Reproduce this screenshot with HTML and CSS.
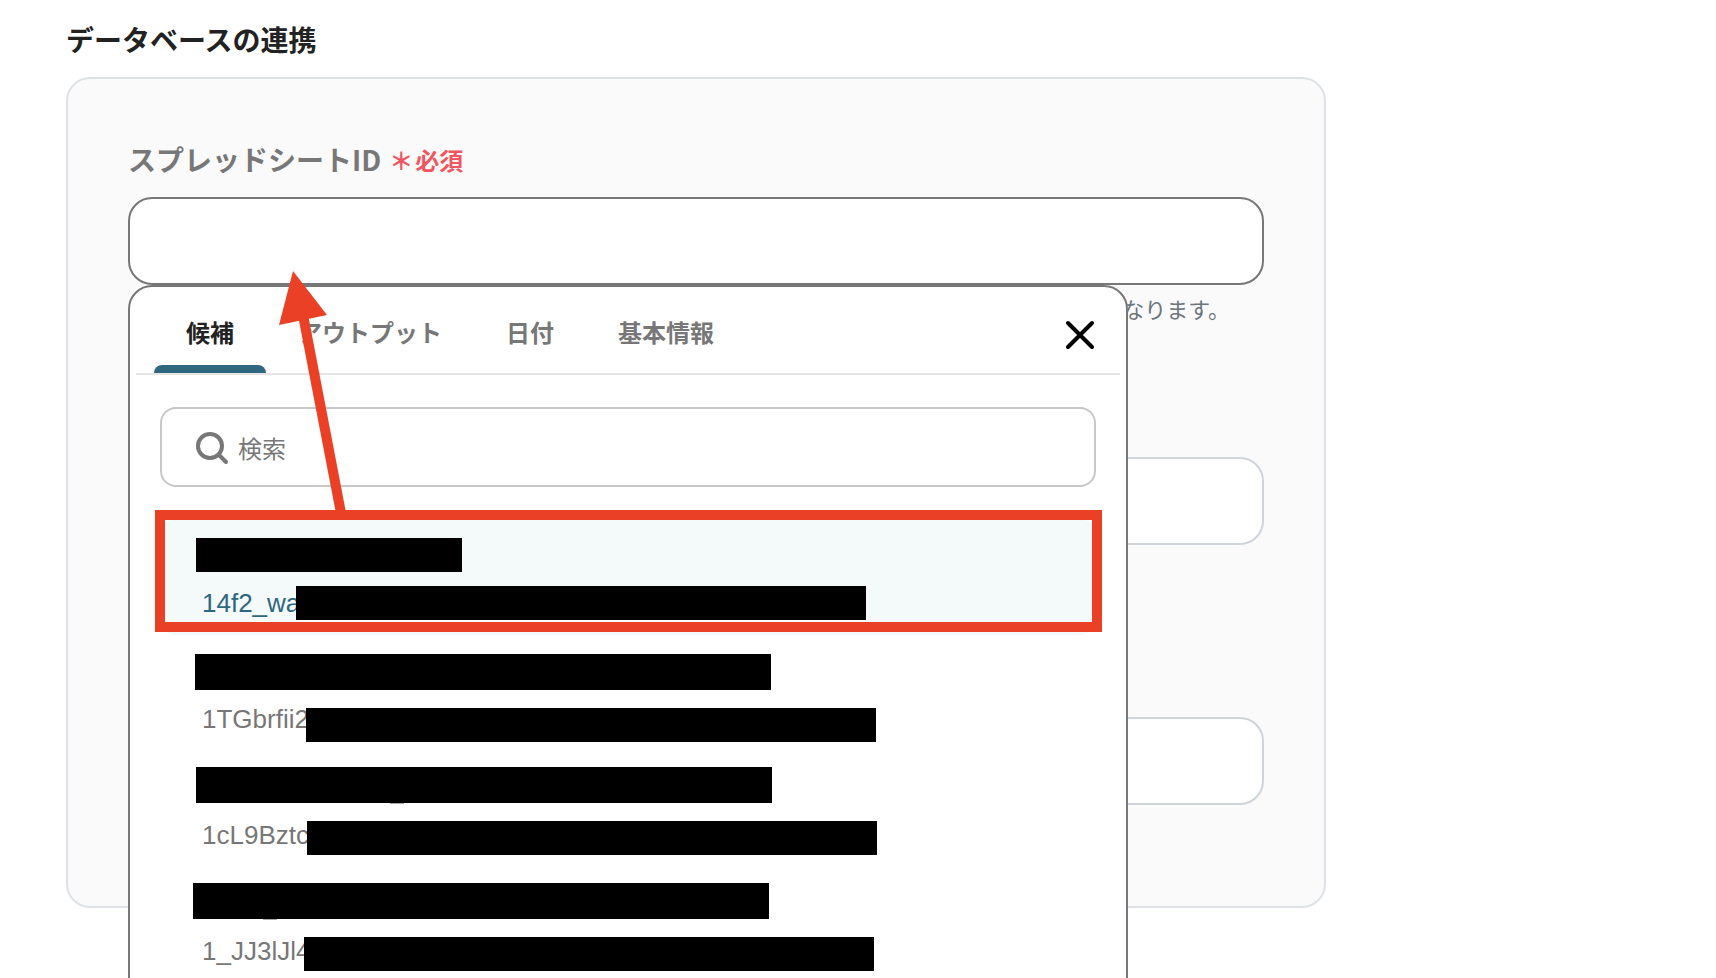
FILE: index.html
```html
<!DOCTYPE html>
<html lang="ja">
<head>
<meta charset="UTF-8">
<meta name="viewport" content="width=device-width,initial-scale=1">
<title>データベースの連携</title>
<link rel="stylesheet" href="styles.css">
</head>
<body>

<main class="page">
  <h1>データベースの連携</h1>

  <form class="card">
    <div class="field">
      <label for="spreadsheetId">スプレッドシートID <span class="required"><span>＊</span><span>必須</span></span></label>
      <div class="combo">
        <input id="spreadsheetId" class="text-input active" type="text">

        <!-- panel de candidatos -->
        <div class="dropdown">
          <div class="tabs">
            <button type="button" class="tab selected">候補</button>
            <button type="button" class="tab">アウトプット</button>
            <button type="button" class="tab">日付</button>
            <button type="button" class="tab">基本情報</button>
            <button type="button" class="close" aria-label="閉じる">
              <svg width="32" height="32" viewBox="0 0 32 32"><path d="M4 4L28 28M28 4L4 28"/></svg>
            </button>
          </div>

          <div class="search">
            <svg width="32" height="32" viewBox="0 0 32 32"><circle cx="14" cy="15" r="12"/><path d="M23 24L30 31"/></svg>
            <input type="search" placeholder="検索" aria-label="検索">
          </div>

          <ul class="options">
            <li><button type="button" class="option selected"><span class="name"></span><span class="id">14f2_wa</span></button></li>
            <li><button type="button" class="option"><span class="name"></span><span class="id">1TGbrfii2</span></button></li>
            <li><button type="button" class="option"><span class="name"></span><span class="id">1cL9Bztc</span></button></li>
            <li><button type="button" class="option"><span class="name"></span><span class="id">1_JJ3lJl4</span></button></li>
          </ul>

          <svg class="marks" aria-hidden="true">
            <g class="redacted">
              <rect x="66" y="251" width="266" height="34"/>
              <rect x="166" y="299" width="570" height="34"/>
              <rect x="65" y="367" width="576" height="36"/>
              <rect x="176" y="421" width="570" height="34"/>
              <rect x="66" y="480" width="576" height="36"/>
              <rect x="177" y="534" width="570" height="34"/>
              <rect x="63" y="596" width="576" height="36"/>
              <rect x="174" y="650" width="570" height="34"/>
            </g>
            <path class="under" d="M260 516h14v1h-14zM133 632h14v1h-14z"/>
            <rect class="frame" x="30" y="228" width="937" height="112"/>
            <path class="shaft" d="M173 28L211 226"/>
            <path class="head" d="M163 -16L149 38L197 28Z"/>
          </svg>
        </div>
      </div>
      <p class="help">なります。</p>
    </div>

    <div class="field">
      <label for="sheetName">シート名</label>
      <input id="sheetName" class="text-input" type="text">
      <p class="help"></p>
    </div>

    <div class="field">
      <label for="tableRange">テーブル範囲</label>
      <input id="tableRange" class="text-input" type="text">
      <p class="help"></p>
    </div>
  </form>
</main>

</body>
</html>
```

FILE: styles.css
```css
:root{
  --text:     #222222;
  --gray:     #777777;
  --border:   #ced4da;
  --primary:  #2f6680;
  --required: #ef5661;
  --mark:     #ea4026;
  --radius:   24px;
}
*{box-sizing:border-box;margin:0;padding:0}
body{
  font-family:"Noto Sans CJK JP",sans-serif;
  background:#fff;
  color:var(--text);
  min-height:100vh;
  overflow:hidden;
}
button,input{font-family:inherit}
button{background:none;border:none;cursor:pointer}
.page{
  max-width:1392px;
  padding:19px 66px 0;
}
h1{font-size:28px;line-height:40px;margin-bottom:18px}

/* ---------- Tarjeta ------------- */
.card{
  display:flex;
  flex-direction:column;
  gap:72px;
  padding:60px 60px 59px;
  background:#fafafa;
  border:2px solid #dee2e6;
  border-radius:var(--radius);
}
.field label{
  display:flex;
  align-items:center;
  gap:8px;
  height:40px;
  margin-bottom:18px;
  font-size:28px;
  line-height:40px;
  font-weight:700;
  color:var(--gray);
}
.required{
  display:flex;
  gap:2px;
  padding-top:2px;
  font-size:24px;
  color:var(--required);
}
.text-input{
  display:block;
  width:100%;
  height:88px;
  padding:0 24px;
  font-size:28px;
  background:#fff;
  border:2px solid var(--border);
  border-radius:var(--radius);
}
.text-input.active{border-color:var(--gray)}
.help{
  min-height:34px;
  margin-top:6px;
  margin-bottom:2px;
  padding-right:34px;
  font-size:22px;
  line-height:34px;
  color:#6c757d;
  text-align:right;
}

/* ---------- Desplegable --------- */
.combo{position:relative}
.dropdown{
  position:absolute;
  z-index:1;
  top:100%;
  left:0;
  width:calc(100% - 136px);
  padding-bottom:32px;
  background:#fff;
  border:2px solid var(--gray);
  border-radius:var(--radius);
}
.tabs{
  display:flex;
  margin:0 6px;
  padding:0 18px;
  border-bottom:2px solid #e5e5e5;
}
.tab{
  display:flex;
  flex-direction:column;
  justify-content:flex-end;
  height:86px;
  padding:0 32px;
  font-size:24px;
  line-height:36px;
  font-weight:700;
  color:var(--gray);
}
.tab::after{
  content:"";
  height:8px;
  margin:15px -32px 0;
  border-radius:8px 8px 0 0;
}
.tab.selected{color:var(--text)}
.tab.selected::after{background:var(--primary)}
.close{
  width:44px;
  margin-left:auto;
  padding-top:14px;
}
.close path{stroke:#000;stroke-width:4;stroke-linecap:round}

.search{
  display:flex;
  align-items:center;
  gap:10px;
  height:80px;
  margin:32px 30px;
  padding:0 34px;
  border:2px solid #c8c8c8;
  border-radius:16px;
}
.search svg{fill:none;stroke:var(--gray);stroke-width:4;stroke-linecap:round;overflow:visible}
.search input{
  flex:1;
  height:48px;
  font-size:24px;
  border:none;
  outline:none;
  background:none;
}
.search input::placeholder{color:var(--gray)}

.options{list-style:none;margin:0 30px}
.option{
  display:flex;
  flex-direction:column;
  gap:14px;
  width:100%;
  height:116px;
  padding:18px 42px 14px;
  border-radius:16px;
  text-align:left;
  color:var(--gray);
}
.option.selected{background:#f4fafa;color:var(--primary)}
.option .name{height:34px}
.option .id{
  font-family:"Liberation Sans",sans-serif;
  font-size:26px;
  line-height:36px;
}

/* ---------- Marcas -------------- */
.marks{
  position:absolute;
  top:0;
  left:0;
  width:100%;
  height:100%;
  overflow:visible;
  pointer-events:none;
}
.under{fill:#aaa}
.frame{fill:none;stroke:var(--mark);stroke-width:10}
.shaft{stroke:var(--mark);stroke-width:10}
.head{fill:var(--mark)}
```
